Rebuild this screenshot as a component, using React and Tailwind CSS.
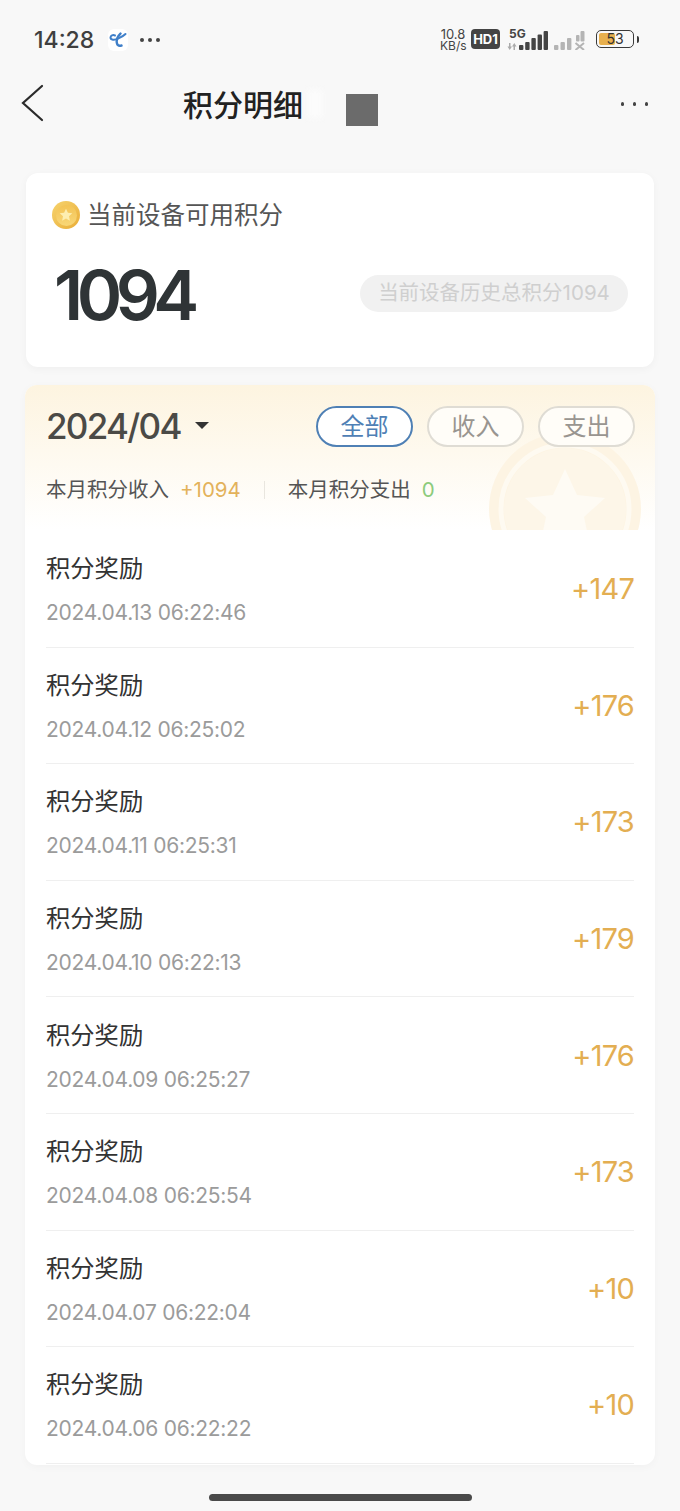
import React from 'react'

const cjk = '[font-family:Inter,"Noto_Sans_CJK_SC",sans-serif]'

const rows = [
  ['2024.04.13 06:22:46', '+147'],
  ['2024.04.12 06:25:02', '+176'],
  ['2024.04.11 06:25:31', '+173'],
  ['2024.04.10 06:22:13', '+179'],
  ['2024.04.09 06:25:27', '+176'],
  ['2024.04.08 06:25:54', '+173'],
  ['2024.04.07 06:22:04', '+10'],
  ['2024.04.06 06:22:22', '+10'],
]

function Dots({ gap, size }) {
  return (
    <div className={`flex ${gap} `}>
      <span className={`${size} rounded-full bg-[#444]`} />
      <span className={`${size} rounded-full bg-[#444]`} />
      <span className={`${size} rounded-full bg-[#444]`} />
    </div>
  )
}

function StatusBar() {
  return (
    <div className="h-[80px] flex items-start justify-between pl-[34px] pr-[41px] pt-[27px]">
      <div className="flex items-center h-[26px]">
        <span className="text-[23px] leading-none font-medium text-[#3f3f3f]">14:28</span>
        <div className="ml-[14px] w-[20px] h-[22px] bg-white rounded-md flex items-center justify-center">
          <svg width="18" height="16" viewBox="0 0 18 16" fill="none" stroke="#3f7fc9" strokeLinecap="round">
            <path d="M6 3.500C4 2.500 1.500 3.500 1.500 5.500c0 2.500 4 2.800 7.500 1.200S15 3.500 16.500 2" strokeWidth="2" />
            <path d="M11.500 1.500C8.500 4.500 7 8 8 11.500c.5 2 2.500 2.500 4.500 2" strokeWidth="2.400" />
          </svg>
        </div>
        <div className="ml-[12px]">
          <Dots gap="gap-[4px]" size="w-[4px] h-[4px]" />
        </div>
      </div>
      <div className="flex items-center h-[26px] -mt-[1px]">
        <div className="w-[26px] text-center text-[#444] mt-[1px]">
          <div className="text-[13px] leading-[12px]">10.8</div>
          <div className="text-[12px] leading-[11px]">KB/s</div>
        </div>
        <div className="ml-[5px] w-[29px] h-[20px] rounded-[4px] bg-[#444] text-white text-[13px] font-bold flex items-center justify-center leading-none">HD1</div>
        <div className="relative ml-[7px] w-[41px] h-[22px]">
          <span className="absolute left-[2px] -top-[1px] text-[12px] font-bold text-[#444] leading-[14px]">5G</span>
          <svg className="absolute left-0 bottom-0" width="10" height="7" viewBox="0 0 10 7" fill="#aaa">
            <path d="M2 0h1.500v3.500H5L2.700 7 .5 3.500H2zM6.500 7H8V3.500h1.500L7.300 0 5 3.500h1.500z" />
          </svg>
          <svg className="absolute right-0 bottom-0" width="29" height="19" viewBox="0 0 29 19" fill="#444">
            <rect x="0" y="14" width="4.400" height="5" rx="1" />
            <rect x="6.200" y="11" width="4.400" height="8" rx="1" />
            <rect x="12.400" y="7" width="4.400" height="12" rx="1" />
            <rect x="18.600" y="3.500" width="4.400" height="15.500" rx="1" />
            <rect x="24.600" y="0" width="4.400" height="19" rx="1" />
          </svg>
        </div>
        <svg className="ml-[6px] mt-[3px]" width="31" height="19" viewBox="0 0 31 19" fill="#b4b4b4">
          <rect x="0" y="14" width="4.400" height="5" rx="1" />
          <rect x="6.500" y="11" width="4.400" height="8" rx="1" />
          <rect x="13" y="7" width="4.400" height="12" rx="1" />
          <rect x="22" y="4" width="3.500" height="6.500" rx="1" />
          <rect x="26.500" y="0" width="4" height="10.500" rx="1" />
          <path d="M21.500 12l8.500 7M30 12l-8.500 7" stroke="#b4b4b4" strokeWidth="2" fill="none" />
        </svg>
        <div className="ml-[11px] relative w-[38px] h-[18px] rounded-[5px] border-[1.500px] border-[#3a3a3a] overflow-hidden">
          <div className="absolute left-[2px] top-[2px] bottom-[2px] w-[16px] bg-[#e8b04e] rounded-[2px]" />
          <span className="absolute inset-0 flex items-center justify-center text-[14px] leading-none text-[#333]">53</span>
        </div>
        <div className="ml-[3px] w-[2px] h-[7px] bg-[#3a3a3a] rounded-r" />
      </div>
    </div>
  )
}

function NavBar() {
  return (
    <div className="relative h-[46px] flex items-center">
      <svg className="ml-[20px]" width="24" height="38" viewBox="0 0 24 38" fill="none" stroke="#2b2b2b" strokeWidth="2.200" strokeLinecap="round">
        <path d="M22 2L3 19l19 17" />
      </svg>
      <span className="ml-[139px] mt-[3px] text-[30px] leading-none font-medium text-[#222]">积分明细</span>
      <div className="ml-[43px] w-[32px] h-[32px] bg-[#6b6b6b] mt-[14px]" />
      <div className="absolute left-[308px] top-[10px] w-[14px] h-[28px] bg-[#fcfcfc] blur-[3px]" />
      <div className="ml-auto mr-[32px] mt-[2px]">
        <Dots gap="gap-[8.500px]" size="w-[3.500px] h-[3.500px]" />
      </div>
    </div>
  )
}

function Coin() {
  return (
    <div className="w-[28px] h-[28px] rounded-full bg-gradient-to-br from-[#f6d36c] to-[#e9ad35] flex items-center justify-center">
      <div className="w-[21px] h-[21px] rounded-full bg-gradient-to-b from-[#f3c353] to-[#f8d777] flex items-center justify-center">
        <svg width="14" height="14" viewBox="0 0 14 14">
          <path d="M7 .8l1.900 4 4.400.500-3.300 3 .9 4.400L7 10.500l-3.900 2.200.9-4.400-3.300-3 4.400-.5z" fill="#fdeeb0" />
        </svg>
      </div>
    </div>
  )
}

function Summary() {
  return (
    <div className="mx-[26px] mt-[47px] h-[194px] bg-white rounded-[12px] shadow-[0_2px_8px_rgba(0,0,0,0.04)] pl-[26px] pr-[26px] pt-[28px]">
      <div className="flex items-center h-[28px]">
        <Coin />
        <span className="ml-[7px] text-[24.500px] leading-none text-[#555]">当前设备可用积分</span>
      </div>
      <div className="flex items-center justify-between mt-[28px]">
        <span className="ml-[2px] text-[69px] leading-[76px] font-semibold tracking-[-6.500px] text-[#2f3436]">1094</span>
        <span className="h-[37px] w-[268px] mb-[4px] rounded-full bg-[#f1f1f1] text-[#cfcfcf] text-[20.500px] flex items-center justify-center leading-none">当前设备历史总积分1094</span>
      </div>
    </div>
  )
}

function Tab({ label, active }) {
  return (
    <div className={`w-[97px] h-[41px] rounded-full flex items-center justify-center text-[24px] leading-none ${active ? 'border-2 border-[#4f80b5] text-[#4f80b5] bg-white' : 'border-2 border-[#dfdcd4] text-[#999590] bg-[#fffdf8]'}`}>
      {label}
    </div>
  )
}

function Header() {
  return (
    <div className="relative h-[145px] overflow-hidden bg-gradient-to-b from-[#fdf4e0] to-white">
      <svg className="absolute left-[463px] top-[47px]" width="154" height="98" viewBox="0 0 154 98">
        <circle cx="77" cy="77" r="76" fill="#fdf4e3" />
        <circle cx="77" cy="77" r="64" fill="none" stroke="#fefaf1" strokeWidth="5" />
        <circle cx="77" cy="77" r="61" fill="#fdf6e8" />
        <path d="M77 37l12 26 28 3-21 19 6 28-25-15-25 15 6-28-21-19 28-3z" fill="#fefbf4" />
      </svg>
      <div className="relative flex items-center justify-between pl-[21px] pr-[20px] pt-[21px]">
        <div className="flex items-center">
          <span className="text-[35px] leading-[41px] font-medium tracking-[-1.700px] text-[#4b4a46]">2024/04</span>
          <span className="ml-[14px] mb-[2px] w-0 h-0 border-x-[7px] border-x-transparent border-t-[7px] border-t-[#333]" />
        </div>
        <div className="flex gap-[14px]">
          <Tab label="全部" active />
          <Tab label="收入" />
          <Tab label="支出" />
        </div>
      </div>
      <div className="relative flex items-center pl-[21px] mt-[30px] h-[26px] text-[20.500px] leading-none text-[#555]">
        <span>本月积分收入</span>
        <span className="ml-[11px] text-[#e3b25b]">+1094</span>
        <span className="ml-[23px] w-px h-[18px] bg-[#e9e6df]" />
        <span className="ml-[23px]">本月积分支出</span>
        <span className="ml-[11px] text-[#8ccb7c]">0</span>
      </div>
    </div>
  )
}

function Row({ time, value }) {
  return (
    <div className="h-[116.600px] border-b-[1.500px] border-[#efefef] flex items-center justify-between">
      <div className="mt-[3px]">
        <div className="text-[24.300px] leading-[28px] text-[#333]">积分奖励</div>
        <div className="mt-[18px] text-[21px] leading-[26px] tracking-[-0.270px] text-[#9b9b9b]">{time}</div>
      </div>
      <span className="text-[29px] leading-none tracking-[-0.800px] text-[#e3ae52]">{value}</span>
    </div>
  )
}

export default function App() {
  return (
    <div className={`w-[680px] h-[1511px] overflow-hidden relative bg-[#f8f8f8] ${cjk}`}>
      <StatusBar />
      <NavBar />
      <Summary />
      <div className="mx-[25px] mt-[18px] h-[1080px] bg-white rounded-[12px] overflow-hidden shadow-[0_2px_8px_rgba(0,0,0,0.03)]">
        <Header />
        <div className="px-[21px] pt-[1px]">
          {rows.map(r => <Row key={r[0]} time={r[0]} value={r[1]} />)}
        </div>
      </div>
      <div className="absolute left-[209px] bottom-[10px] w-[263px] h-[7px] rounded-full bg-[#4a4a4a]" />
    </div>
  )
}
